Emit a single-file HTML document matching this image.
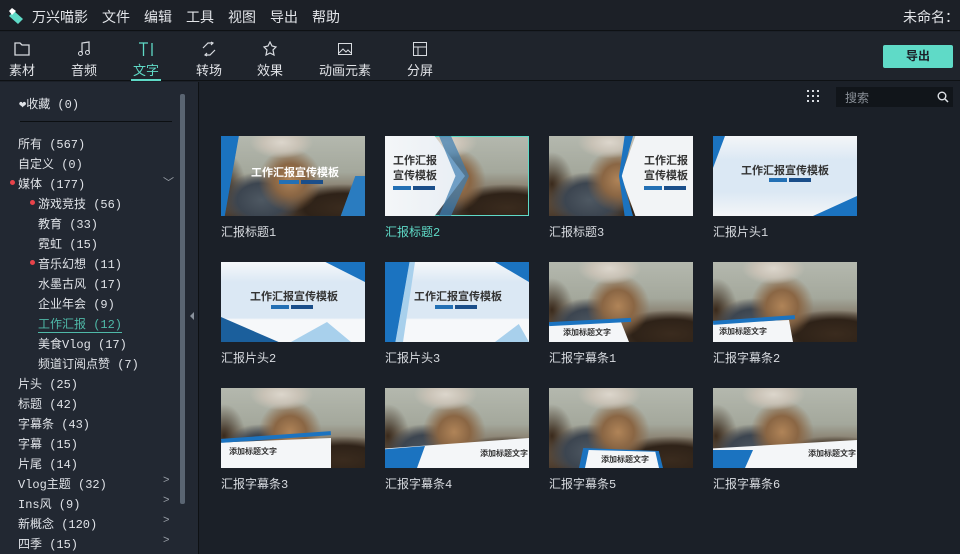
<!DOCTYPE html>
<html><head><meta charset="utf-8"><style>
*{margin:0;padding:0;box-sizing:border-box}
body{width:960px;height:554px;background:#1b2028;font-family:"Liberation Sans","Noto Sans CJK SC",sans-serif;color:#d4d7dc;position:relative;overflow:hidden;font-size:13px}
.a{position:absolute}
.menu{left:0;top:0;width:960px;height:31px;background:#1c2027;border-bottom:1px solid #0e1114}
.menu span{position:absolute;top:7px;font-size:14px;color:#e2e4e8}
.tool{left:0;top:32px;width:960px;height:49px;background:#1f242c;border-bottom:1px solid #0e1114}
.tb{position:absolute;top:0;text-align:center;font-size:13px;color:#e2e4e8}
.tb svg{display:block;margin:9px auto 3px}
.side{left:0;top:82px;width:199px;height:472px;background:#222832;border-right:1px solid #0e1114}
.side div{position:absolute;font-family:"Liberation Mono","Noto Sans CJK SC",monospace;font-size:12px;color:#e0e3e8;white-space:nowrap}
.dot{position:absolute;width:5px;height:5px;border-radius:50%;background:#e8434a}
.chev{position:absolute;left:163px;color:#9aa0a8;font-size:11px}
.th{position:absolute;width:144px;height:80px;overflow:hidden}
.lab{position:absolute;font-size:12px;color:#d8dbe0;font-family:"Liberation Mono","Noto Sans CJK SC",monospace}
.photo{background:
 radial-gradient(ellipse 22% 20% at 42% 8%,#dcd6cc 0,#c9c2b6 55%,transparent 100%),
 radial-gradient(ellipse 22% 40% at 48% 55%,#b08458 0,#8a6644 50%,transparent 100%),
 radial-gradient(ellipse 28% 35% at 28% 80%,#4e5862 0,#3c4550 60%,transparent 100%),
 radial-gradient(ellipse 45% 30% at 85% 90%,#3a2b1e 0,#2e2218 60%,transparent 100%),
 radial-gradient(ellipse 15% 40% at 2% 60%,#3a2a1c 0,transparent 100%),
 linear-gradient(#b4b8ae,#a4a89c 45%,#7a6a58 75%,#4a3a2c)}
.t1{position:absolute;font-weight:bold;color:#333;font-size:10px;white-space:nowrap}
.bar{position:absolute;height:4px;background:#2370b5}
.bl{background:#1b73c0}
</style></head><body>

<div class="a menu">
 <svg class="a" style="left:8px;top:6px" width="16" height="20" viewBox="0 0 16 20"><path d="M1 10 L6 5 L15 13 L10 18 Z" fill="#5fdac7"/><path d="M4 2 L8 5 L4 9 L1 5Z" fill="#fff"/></svg>
 <span style="left:32px">万兴喵影</span><span style="left:102px">文件</span><span style="left:144px">编辑</span><span style="left:186px">工具</span><span style="left:228px">视图</span><span style="left:270px">导出</span><span style="left:312px">帮助</span>
 <span style="left:903px">未命名：</span>
</div>

<div class="a tool">
 <div class="tb" style="left:8px;width:28px"><svg width="18" height="16" viewBox="0 0 18 16"><path d="M2 2h5l2 2h7v10H2z" fill="none" stroke="#d8dbe0" stroke-width="1.3"/></svg>素材</div>
 <div class="tb" style="left:70px;width:28px"><svg width="14" height="16" viewBox="0 0 14 16"><path d="M5 12V2l7-1v10" fill="none" stroke="#d8dbe0" stroke-width="1.2"/><circle cx="3.5" cy="12.5" r="2" fill="none" stroke="#d8dbe0"/><circle cx="10.5" cy="11.5" r="2" fill="none" stroke="#d8dbe0"/></svg>音频</div>
 <div class="tb" style="left:131px;width:30px;color:#5fdac7;height:49px;border-bottom:2px solid #5fdac7"><svg width="16" height="16" viewBox="0 0 16 16"><path d="M1 2h9M5.5 2v13M14 2v13" stroke="#5fdac7" stroke-width="1.3"/></svg>文字</div>
 <div class="tb" style="left:195px;width:28px"><svg width="16" height="16" viewBox="0 0 16 16"><path d="M2 7l5-5h5M14 9l-5 5H4M10 1l2 1-2 2M6 12l-2 2 2 1" fill="none" stroke="#d8dbe0" stroke-width="1.2"/></svg>转场</div>
 <div class="tb" style="left:256px;width:28px"><svg width="16" height="16" viewBox="0 0 16 16"><path d="M8 1l2 4 4 1-3 3 1 5-4-2-4 2 1-5-3-3 4-1z" fill="none" stroke="#d8dbe0" stroke-width="1.2"/></svg>效果</div>
 <div class="tb" style="left:318px;width:54px"><svg width="16" height="16" viewBox="0 0 16 16"><rect x="1.5" y="2.5" width="13" height="11" fill="none" stroke="#d8dbe0"/><path d="M2 12l4-4 3 3 2-2 3 3" fill="none" stroke="#d8dbe0"/></svg>动画元素</div>
 <div class="tb" style="left:406px;width:28px"><svg width="16" height="16" viewBox="0 0 16 16"><rect x="1.5" y="1.5" width="13" height="13" fill="none" stroke="#d8dbe0"/><path d="M1.5 6h13M6 6v8.5" stroke="#d8dbe0"/></svg>分屏</div>
 <div class="a" style="left:883px;top:13px;width:70px;height:23px;background:#5fdac7;border-radius:2px;color:#1b2028;font-weight:bold;text-align:center;line-height:23px;font-size:12px">导出</div>
</div>

<div class="a side">
 <div style="left:19px;top:13px">❤收藏 (0)</div>
 <div style="left:20px;top:39px;width:152px;height:1px;background:#0c0f12"></div>
 <div style="left:18px;top:53px">所有 (567)</div>
 <div style="left:18px;top:73px">自定义 (0)</div>
 <span class="dot" style="left:10px;top:98px"></span><div style="left:18px;top:93px">媒体 (177)</div><span class="chev" style="top:92px">﹀</span>
 <span class="dot" style="left:30px;top:118px"></span><div style="left:38px;top:113px">游戏竞技 (56)</div>
 <div style="left:38px;top:133px">教育 (33)</div>
 <div style="left:38px;top:153px">霓虹 (15)</div>
 <span class="dot" style="left:30px;top:178px"></span><div style="left:38px;top:173px">音乐幻想 (11)</div>
 <div style="left:38px;top:193px">水墨古风 (17)</div>
 <div style="left:38px;top:213px">企业年会 (9)</div>
 <div style="left:38px;top:233px;color:#4fb9a8;border-bottom:1px solid #4fb9a8;width:84px">工作汇报 (12)</div>
 <div style="left:38px;top:253px">美食Vlog (17)</div>
 <div style="left:38px;top:273px">频道订阅点赞 (7)</div>
 <div style="left:18px;top:293px">片头 (25)</div>
 <div style="left:18px;top:313px">标题 (42)</div>
 <div style="left:18px;top:333px">字幕条 (43)</div>
 <div style="left:18px;top:353px">字幕 (15)</div>
 <div style="left:18px;top:373px">片尾 (14)</div>
 <div style="left:18px;top:393px">Vlog主题 (32)</div><span class="chev" style="top:392px">&gt;</span>
 <div style="left:18px;top:413px">Ins风 (9)</div><span class="chev" style="top:412px">&gt;</span>
 <div style="left:18px;top:433px">新概念 (120)</div><span class="chev" style="top:432px">&gt;</span>
 <div style="left:18px;top:453px">四季 (15)</div><span class="chev" style="top:452px">&gt;</span>
 <span class="a" style="left:180px;top:12px;width:5px;height:410px;background:#5a6572;border-radius:2px"></span>
 <span class="a" style="left:190px;top:230px;width:0;height:0;border:4px solid transparent;border-right-color:#8a929c;border-left:0"></span>
</div>

<svg class="a" style="left:807px;top:90px" width="14" height="14" viewBox="0 0 14 14" fill="#d8dbe0"><rect x="0" y="0" width="2" height="2"/><rect x="5" y="0" width="2" height="2"/><rect x="10" y="0" width="2" height="2"/><rect x="0" y="5" width="2" height="2"/><rect x="5" y="5" width="2" height="2"/><rect x="10" y="5" width="2" height="2"/><rect x="0" y="10" width="2" height="2"/><rect x="5" y="10" width="2" height="2"/><rect x="10" y="10" width="2" height="2"/></svg>
<div class="a" style="left:836px;top:87px;width:117px;height:20px;background:#11151a;color:#8a9098;font-size:12px;padding:2px 9px">搜索</div>
<svg class="a" style="left:937px;top:91px" width="12" height="12" viewBox="0 0 12 12"><circle cx="5" cy="5" r="3.8" fill="none" stroke="#e0e3e8" stroke-width="1.4"/><path d="M8 8l3 3" stroke="#e0e3e8" stroke-width="1.5"/></svg>

<!-- Row 1 -->
<div class="th photo" style="left:221px;top:136px">
 <div class="a" style="left:0;top:0;width:30px;height:80px;background:linear-gradient(100deg,#1b73c0 40%,transparent 41%)"></div>
 <div class="a" style="right:0;top:40px;width:30px;height:40px;background:linear-gradient(110deg,transparent 45%,#2a7cc0 46%)"></div>
 <div class="t1" style="left:30px;top:28px;color:#fff;font-size:11px">工作汇报宣传模板</div>
 <div class="bar" style="left:58px;top:44px;width:20px"></div><div class="bar" style="left:80px;top:44px;width:22px;background:#1a4e8a"></div>
</div>
<div class="th photo" style="left:385px;top:136px;outline:1px solid #5fdac7;outline-offset:-1px">
 <div class="a" style="left:0;top:0;width:80px;height:80px;background:linear-gradient(to right,#f4f6f8,#e8eef4);clip-path:polygon(0 0,62% 0,100% 50%,62% 100%,0 100%)"></div>
 <div class="a" style="left:54px;top:0;width:30px;height:80px;background:#3b7cb0;opacity:.7;clip-path:polygon(0 0,40% 0,100% 50%,40% 100%,0 100%,55% 50%)"></div>
 <div class="t1" style="left:8px;top:18px;font-size:11px;line-height:15px">工作汇报<br>宣传模板</div>
 <div class="bar" style="left:8px;top:50px;width:18px"></div><div class="bar" style="left:28px;top:50px;width:22px;background:#1a4e8a"></div>
</div>
<div class="th photo" style="left:549px;top:136px">
 <div class="a" style="left:72px;top:0;width:72px;height:80px;background:#f2f4f6;clip-path:polygon(20% 0,100% 0,100% 100%,20% 100%,0 50%)"></div>
 <div class="a" style="left:70px;top:0;width:14px;height:80px;background:#1b73c0;clip-path:polygon(40% 0,100% 0,20% 50%,100% 100%,40% 100%,0 50%)"></div>
 <div class="t1" style="left:95px;top:18px;font-size:11px;line-height:15px">工作汇报<br>宣传模板</div>
 <div class="bar" style="left:95px;top:50px;width:18px"></div><div class="bar" style="left:115px;top:50px;width:22px;background:#1a4e8a"></div>
</div>
<div class="th" style="left:713px;top:136px;background:linear-gradient(#f4f6f8,#dbe8f4 30%,#dbe8f4 70%,#f4f6f8)">
 <div class="a bl" style="left:0;top:0;width:40px;height:80px;clip-path:polygon(0 0,30% 0,0 40%)"></div>
 <div class="a bl" style="left:100px;top:60px;width:44px;height:20px;clip-path:polygon(100% 0,100% 100%,0 100%)"></div>
 <div class="t1" style="left:28px;top:26px;font-size:11px">工作汇报宣传模板</div>
 <div class="bar" style="left:56px;top:42px;width:18px"></div><div class="bar" style="left:76px;top:42px;width:22px;background:#1a4e8a"></div>
</div>
<div class="lab" style="left:221px;top:223px">汇报标题1</div>
<div class="lab" style="left:385px;top:223px;color:#5fdac7">汇报标题2</div>
<div class="lab" style="left:549px;top:223px">汇报标题3</div>
<div class="lab" style="left:713px;top:223px">汇报片头1</div>

<!-- Row 2 -->
<div class="th" style="left:221px;top:262px;background:linear-gradient(#f6f8fa,#dbe8f4 25%,#dbe8f4 70%,#f6f8fa 72%)">
 <div class="a bl" style="left:100px;top:0;width:44px;height:20px;clip-path:polygon(10% 0,100% 0,100% 100%)"></div>
 <div class="a" style="left:0;top:55px;width:144px;height:25px;background:#1b5f9c;clip-path:polygon(0 0,40% 100%,0 100%)"></div>
 <div class="a" style="left:70px;top:60px;width:60px;height:20px;background:#a8d0ec;clip-path:polygon(0 100%,60% 0,100% 100%)"></div>
 <div class="t1" style="left:29px;top:26px;font-size:11px">工作汇报宣传模板</div>
 <div class="bar" style="left:50px;top:43px;width:18px"></div><div class="bar" style="left:70px;top:43px;width:22px;background:#1a4e8a"></div>
</div>
<div class="th" style="left:385px;top:262px;background:linear-gradient(#f6f8fa,#dbe8f4 25%,#dbe8f4 70%,#f6f8fa 72%)">
 <div class="a" style="left:0;top:0;width:30px;height:80px;background:linear-gradient(100deg,#1b73c0 55%,#a8d0ec 56%);clip-path:polygon(0 0,100% 0,60% 100%,0 100%)"></div>
 <div class="a bl" style="left:110px;top:0;width:34px;height:20px;clip-path:polygon(0 0,100% 0,100% 100%)"></div>
 <div class="a" style="left:110px;top:62px;width:34px;height:18px;background:#a8d0ec;clip-path:polygon(0 100%,70% 0,100% 100%)"></div>
 <div class="t1" style="left:29px;top:26px;font-size:11px">工作汇报宣传模板</div>
 <div class="bar" style="left:50px;top:43px;width:18px"></div><div class="bar" style="left:70px;top:43px;width:22px;background:#1a4e8a"></div>
</div>
<div class="th photo" style="left:549px;top:262px">
 <div class="a" style="left:0;top:60px;width:80px;height:20px;background:#f4f6f8;clip-path:polygon(0 10%,90% 0,100% 100%,0 100%)"></div>
 <div class="a bl" style="left:0;top:58px;width:82px;height:4px;transform:rotate(-3deg)"></div>
 <div class="t1" style="left:14px;top:65px;font-size:8px">添加标题文字</div>
</div>
<div class="th photo" style="left:713px;top:262px">
 <div class="a" style="left:0;top:58px;width:80px;height:22px;background:#f4f6f8;clip-path:polygon(0 15%,95% 0,100% 100%,0 100%)"></div>
 <div class="a bl" style="left:0;top:56px;width:82px;height:4px;transform:rotate(-4deg)"></div>
 <div class="t1" style="left:6px;top:64px;font-size:8px">添加标题文字</div>
</div>
<div class="lab" style="left:221px;top:349px">汇报片头2</div>
<div class="lab" style="left:385px;top:349px">汇报片头3</div>
<div class="lab" style="left:549px;top:349px">汇报字幕条1</div>
<div class="lab" style="left:713px;top:349px">汇报字幕条2</div>

<!-- Row 3 -->
<div class="th photo" style="left:221px;top:388px">
 <div class="a" style="left:0;top:50px;width:110px;height:30px;background:#f4f6f8;clip-path:polygon(0 15%,100% 0,100% 100%,0 100%)"></div>
 <div class="a bl" style="left:0;top:47px;width:110px;height:4px;transform:rotate(-4deg)"></div>
 <div class="t1" style="left:8px;top:58px;font-size:8px">添加标题文字</div>
</div>
<div class="th photo" style="left:385px;top:388px">
 <div class="a" style="left:0;top:50px;width:144px;height:30px;background:#f4f6f8;clip-path:polygon(0 35%,100% 0,100% 100%,0 100%)"></div>
 <div class="a bl" style="left:0;top:58px;width:40px;height:22px;clip-path:polygon(0 15%,100% 0,80% 100%,0 100%)"></div>
 <div class="t1" style="left:95px;top:60px;font-size:8px">添加标题文字</div>
</div>
<div class="th photo" style="left:549px;top:388px">
 <div class="a bl" style="left:30px;top:60px;width:84px;height:20px;clip-path:polygon(5% 0,95% 15%,100% 100%,0 100%)"></div>
 <div class="a" style="left:36px;top:62px;width:74px;height:18px;background:#f4f6f8;clip-path:polygon(5% 0,95% 10%,100% 100%,0 100%)"></div>
 <div class="t1" style="left:52px;top:66px;font-size:8px">添加标题文字</div>
</div>
<div class="th photo" style="left:713px;top:388px">
 <div class="a" style="left:0;top:52px;width:144px;height:28px;background:#f4f6f8;clip-path:polygon(0 30%,100% 0,100% 100%,0 100%)"></div>
 <div class="a bl" style="left:0;top:62px;width:40px;height:18px;clip-path:polygon(0 0,100% 0,80% 100%,0 100%)"></div>
 <div class="t1" style="left:95px;top:60px;font-size:8px">添加标题文字</div>
</div>
<div class="lab" style="left:221px;top:475px">汇报字幕条3</div>
<div class="lab" style="left:385px;top:475px">汇报字幕条4</div>
<div class="lab" style="left:549px;top:475px">汇报字幕条5</div>
<div class="lab" style="left:713px;top:475px">汇报字幕条6</div>

</body></html>
